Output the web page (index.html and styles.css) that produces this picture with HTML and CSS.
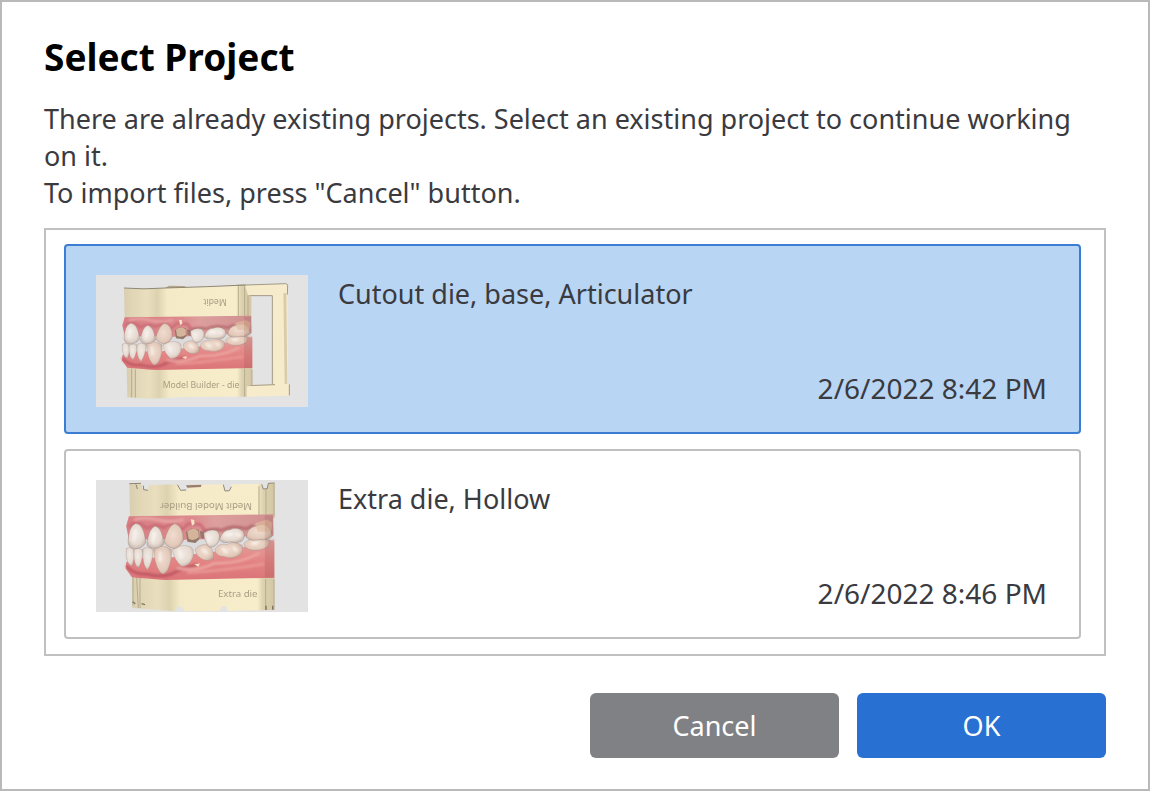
FILE: index.html
```html
<!DOCTYPE html>
<html lang="en">
<head>
    <meta charset="UTF-8">
    <meta name="viewport" content="width=device-width, initial-scale=1.0">
    <title>Select Project</title>
    <link rel="stylesheet" href="styles.css">
</head>
<body>
    <form class="dialog">
        <h1 class="title">Select Project</h1>
        <p class="message">There are already existing projects. Select an existing project to continue working on it.<br>To import files, press "Cancel" button.</p>

        <!-- Project list -->
        <div class="project-list" role="radiogroup" aria-label="Projects">
            <label class="project">
                <input class="project-radio" type="radio" name="project" value="1" checked>
                <svg class="thumb" viewBox="18 21 636 396" aria-hidden="true">
                    <defs>
                        <linearGradient id="plaster" x1="0" x2="1" y1="0" y2="0">
                            <stop offset="0" stop-color="#d8cdaf"/>
                            <stop offset=".06" stop-color="#e0d6b6"/>
                            <stop offset=".18" stop-color="#e9dfbf"/>
                            <stop offset=".26" stop-color="#ddd2b0"/>
                            <stop offset=".34" stop-color="#f5eac8"/>
                            <stop offset=".88" stop-color="#f7edcb"/>
                            <stop offset=".92" stop-color="#ddd2b0"/>
                            <stop offset="1" stop-color="#d2c6a4"/>
                        </linearGradient>
                        <linearGradient id="gumTop" x1="0" x2="1" y1="0" y2="0">
                            <stop offset="0" stop-color="#d97e84"/>
                            <stop offset=".45" stop-color="#dc8a8d"/>
                            <stop offset=".6" stop-color="#dd9f9d"/>
                            <stop offset="1" stop-color="#cf8f8f"/>
                        </linearGradient>
                        <linearGradient id="gumBottom" x1="0" x2="0" y1="0" y2="1">
                            <stop offset="0" stop-color="#e4a29e"/>
                            <stop offset=".55" stop-color="#e48384"/>
                            <stop offset="1" stop-color="#da7478"/>
                        </linearGradient>
                        <radialGradient id="tooth" cx=".45" cy=".4" r=".7">
                            <stop offset="0" stop-color="#f1eae5"/>
                            <stop offset=".6" stop-color="#e6dad1"/>
                            <stop offset="1" stop-color="#bfaca3"/>
                        </radialGradient>
                        <radialGradient id="toothWarm" cx=".45" cy=".45" r=".7">
                            <stop offset="0" stop-color="#f0dccf"/>
                            <stop offset=".6" stop-color="#e3cabb"/>
                            <stop offset="1" stop-color="#b99c8e"/>
                        </radialGradient>
                        <filter id="soft" x="-20%" y="-20%" width="140%" height="140%">
                            <feGaussianBlur stdDeviation="3"/>
                        </filter>
                        <filter id="render" x="-5%" y="-5%" width="110%" height="110%">
                            <feGaussianBlur stdDeviation="1.6"/>
                        </filter>
                        <g id="teeth">
                            <path fill="url(#gumTop)" d="M104 148L483 143L485 206L440 214L250 222L108 224L97 172Z"/>
                            <path fill="#dcdbdd" d="M104 205L250 206L330 204L410 198L486 196L486 209L430 224L320 232L108 236Z"/>
                            <path fill="url(#gumBottom)" d="M97 262Q125 245 200 252Q280 240 360 232Q430 222 487 205L487 300L200 306Q145 302 112 299L96 278Z"/>
                            <!-- gum shading and highlights -->
                            <g filter="url(#soft)" fill="none" stroke-linecap="round">
                                <path stroke="#bd5662" stroke-width="7" d="M99 272Q118 294 154 291Q185 300 214 292Q246 276 280 269"/>
                                <path stroke="#e8a5a3" stroke-width="7" d="M120 156Q150 149 182 157T246 156"/>
                                <path stroke="#cb6a74" stroke-width="7" d="M106 172Q125 154 151 178Q175 164 196 176Q222 158 246 180L260 166L292 168L304 183"/>
                                <path stroke="#b56a6e" stroke-width="7" d="M300 185Q330 176 348 183Q375 168 413 179L430 171"/>
                                <path stroke="#eda9a4" stroke-width="6" d="M232 277Q286 285 330 264Q390 267 446 240"/>
                                <path stroke="#ea9a96" stroke-width="6" d="M260 287Q340 284 458 266"/>
                            </g>
                            <path fill="#f4e3c4" d="M267 155L276 157L277 167L270 171ZM276 267L291 265L287 273Z"/>
                            <!-- lower teeth -->
                            <g stroke="#9c8781" stroke-opacity=".4" stroke-width="2">
                                <path fill="url(#tooth)" d="M97 228Q107 222 117 231Q121 255 112 271Q101 269 97 247Z"/>
                                <path fill="url(#tooth)" d="M117 231Q129 224 141 232Q140 260 130 275Q120 273 118 252Z"/>
                                <path fill="url(#tooth)" d="M141 229Q154 222 169 230Q166 262 153 281Q143 273 141 250Z"/>
                                <path fill="url(#toothWarm)" d="M170 228Q189 214 216 230Q219 253 207 280Q195 299 185 285Q169 261 170 228Z"/>
                                <path fill="url(#tooth)" d="M219 231Q239 215 265 223Q278 229 272 251Q263 272 242 272Q223 256 219 231Z"/>
                                <path fill="url(#toothWarm)" d="M279 229Q296 212 317 221Q331 238 326 253Q309 263 292 251Q279 244 279 229Z"/>
                                <path fill="url(#toothWarm)" d="M330 230Q341 213 362 218Q383 206 403 221Q406 240 389 247Q373 255 357 248Q334 249 330 230Z"/>
                                <path fill="url(#toothWarm)" d="M406 216Q423 200 441 207Q457 195 475 208L470 223Q444 238 420 230Q408 225 406 216Z"/>
                            </g>
                            <!-- upper teeth -->
                            <g stroke="#8a756b" stroke-opacity=".45" stroke-width="2">
                                <path fill="url(#tooth)" d="M102 212Q103 174 121 166Q142 164 149 212Q139 229 119 228Q103 227 102 212Z"/>
                                <path fill="url(#tooth)" d="M152 217Q155 179 173 172Q192 176 196 217Q184 229 167 227Q153 226 152 217Z"/>
                                <path fill="url(#toothWarm)" d="M197 211Q206 173 224 166Q246 170 248 207Q238 226 222 228Q200 222 197 211Z"/>
                                <path fill="url(#tooth)" d="M301 190Q316 178 334 183Q347 190 341 209Q332 225 316 225Q305 215 301 190Z"/>
                                <path fill="url(#tooth)" d="M342 206Q352 180 370 181Q390 172 405 186Q412 200 400 210Q386 216 371 211Q353 217 342 206Z"/>
                                <path fill="url(#toothWarm)" d="M413 200Q415 176 439 172Q463 160 477 181L481 197Q462 210 449 205Q426 212 413 200Z"/>
                            </g>
                            <!-- prepared die -->
                            <path fill="#94796a" d="M254 187L268 178L288 181L290 204L279 214L258 211Z"/>
                            <path fill="#d6b49c" d="M258 185Q272 173 287 184L288 200Q273 211 261 203Z"/>
                            <path fill="#6f6358" d="M291 184L301 187L302 204L293 202Z" opacity=".6"/>
                            <g filter="url(#soft)" fill="none" stroke="#fbf6f1" stroke-width="8" stroke-linecap="round" opacity=".7">
                                <path d="M120 185L117 208M170 189L168 211M311 196L316 211M359 194L374 192M387 191L395 195M186 238L186 258M236 233L241 250M300 231L309 238M351 228L360 237M380 226L387 232M430 215L441 213"/>
                            </g>
                            <path fill="#e2bb9f" d="M436 165L468 156L482 164L478 186L443 186Z" opacity=".65"/>
                            <path fill="#6e3d35" d="M462 146H485V190L477 205L487 213V300H462Z" opacity=".14"/>
                        </g>
                    </defs>
                    <rect class="thumb-bg" x="18" y="21" width="636" height="396"/>
                    <g filter="url(#render)">
                        <path fill="#b9a587" d="M225 60L237 53L283 54L292 60Z"/>
                        <!-- articulator arm -->
                        <path fill="#f6eccb" fill-rule="evenodd" d="M440 53L587 47Q594 48 593 57L594 345L599 348V378L594 383L467 386L470 353L486 351V210L478 205L484 190V85L474 82ZM484 82V351L550 350L547 82Z"/>
                        <path fill="#d8ccab" d="M580 76L589 75L592 347L584 349Z"/>
                        <path fill="none" stroke="#a39b84" stroke-width="3" d="M440 52L587 47L593 50L592 80M474 83H547V349M470 353L555 350M598 349V382"/>
                        <!-- bases -->
                        <path fill="url(#plaster)" d="M102 61L210 61L465 53L474 80L484 85V150L104 152Z"/>
                        <path fill="url(#plaster)" d="M110 295L486 297V352L470 355V386L285 387L176 392L112 388Z"/>
                        <path fill="none" stroke="#8d8774" stroke-width="3" d="M102 60Q160 65 225 60L350 56L467 51"/>
                        <path fill="none" stroke="#b5ab8c" stroke-width="3" d="M445 55V147M464 54V148M474 82V145M464 302V386M486 304V351M125 302V388M136 304V389"/>
                        <use href="#teeth"/>
                        <text class="engraving" transform="rotate(180 375 102)" x="375" y="110" text-anchor="middle">Medit</text>
                        <text class="engraving" x="218" y="361">Model Builder - die</text>
                    </g>
                </svg>
                <span class="project-info">
                    <span class="project-name">Cutout die, base, Articulator</span>
                    <time class="project-date" datetime="2022-02-06T20:42">2/6/2022 8:42 PM</time>
                </span>
            </label>

            <label class="project">
                <input class="project-radio" type="radio" name="project" value="2">
                <svg class="thumb" viewBox="18 21 636 396" aria-hidden="true">
                    <rect class="thumb-bg" x="18" y="21" width="636" height="396"/>
                    <g filter="url(#render)">
                        <path fill="url(#plaster)" d="M118 32L153 31L160 50L174 52L177 36L262 34L275 52L291 54L298 36L400 34L405 52L416 54L425 34L512 32L519 48L532 47L535 31L554 30V136L120 136Z"/>
                        <path fill="#9d7d6d" d="M288 37L334 35L333 42L292 44Z"/>
                        <path fill="url(#plaster)" d="M126 306L553 308V411L414 414L407 398L396 400L388 414L285 415L273 399L262 401L256 415L127 405Z"/>
                        <path fill="none" stroke="#8f8775" stroke-width="3" d="M118 32L153 31M138 34L142 48M160 38L161 50L174 52M262 35L272 52L288 51M400 35L405 54L418 53L424 41M515 34L520 48L532 47L535 31L554 30"/>
                        <path fill="none" stroke="#b5ab8c" stroke-width="3" d="M507 40V132M528 49V132M552 32V130M552 318V410M527 318V410M129 314V398M140 314L145 405M150 315V405"/>
                        <path fill="none" stroke="#7c7361" stroke-width="4" d="M128 386L136 392M155 392L165 395M528 398V411M548 398V410"/>
                        <use href="#teeth" transform="matrix(1.14 0 0 1.21 -2 -49)"/>
                        <text class="engraving engraving-large" transform="rotate(180 348 99)" x="348" y="108" text-anchor="middle">Medit Model Builder</text>
                        <text class="engraving engraving-large" x="384" y="373">Extra die</text>
                    </g>
                </svg>
                <span class="project-info">
                    <span class="project-name">Extra die, Hollow</span>
                    <time class="project-date" datetime="2022-02-06T20:46">2/6/2022 8:46 PM</time>
                </span>
            </label>
        </div>

        <div class="buttons">
            <button class="btn btn-cancel" type="button">Cancel</button>
            <button class="btn btn-ok" type="submit">OK</button>
        </div>
    </form>
</body>
</html>
```
FILE: styles.css
```css
* {
    box-sizing: border-box;
}

body {
    margin: 0;
    background-color: #fff;
    color: #3a3a3f;
    font-family: 'Noto Sans', 'Open Sans', sans-serif;
    font-size: 27px;
    line-height: 37px;
}

.dialog {
    display: flex;
    flex-direction: column;
    min-height: 100vh;
    padding: 30px 42px 31px;
    border: 2px solid #b9b9b9;
}

.title {
    margin: 0 0 18px;
    color: #000;
    font-size: 37px;
    line-height: 50px;
}

.message {
    margin: 0 0 17px;
}

/* Project list */
.project-list {
    display: flex;
    flex-direction: column;
    gap: 15px;
    padding: 14px 23px 15px 18px;
    border: 2px solid #c0c0c0;
}

.project {
    display: flex;
    gap: 30px;
    padding: 29px 32px 25px 30px;
    border: 2px solid #c0c0c0;
    border-radius: 4px;
    cursor: pointer;
}

.project:has(.project-radio:checked) {
    background-color: #b8d5f3;
    border-color: #3a7dd2;
}

.project-radio {
    position: absolute;
    opacity: 0;
    pointer-events: none;
}

.thumb {
    flex: none;
    width: 212px;
    height: 132px;
}

.thumb-bg {
    fill: #e3e3e3;
}

.engraving {
    fill: #a89e83;
    font-size: 26px;
}

.engraving-large {
    font-size: 29px;
}

.project-info {
    display: flex;
    flex: 1;
    flex-direction: column;
    justify-content: space-between;
}

.project-date {
    align-self: flex-end;
    font-size: 28px;
}

/* Footer buttons */
.buttons {
    display: flex;
    justify-content: flex-end;
    gap: 18px;
    margin-top: auto;
}

.btn {
    width: 249px;
    height: 65px;
    padding: 0;
    border: none;
    border-radius: 6px;
    color: #fff;
    font: inherit;
    cursor: pointer;
}

.btn-cancel {
    background-color: #808185;
}

.btn-ok {
    background-color: #2870d2;
}
```
